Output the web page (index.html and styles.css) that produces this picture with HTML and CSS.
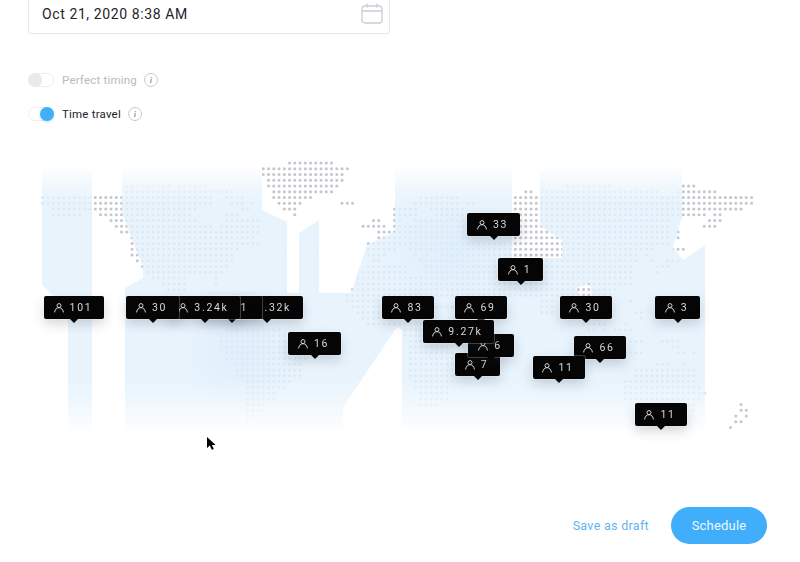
FILE: index.html
```html
<!DOCTYPE html>
<html lang="en">
<head>
<meta charset="utf-8">
<title>Schedule post</title>
<link rel="stylesheet" href="styles.css">
</head>
<body>
<svg class="sprite" aria-hidden="true">
  <symbol id="person" viewBox="0 0 10 10"><circle cx="5" cy="2.6" r="2"/><path d="M.6 9.4C1 6.4 2.6 4.7 5 4.7s4 1.7 4.4 4.7"/></symbol>
</svg>
<main class="page">
  <div class="field">
    <span class="field-value">Oct 21, 2020 8:38 AM</span>
    <svg class="calendar" viewBox="0 0 22 21"><rect x="1" y="3" width="20" height="17" rx="3"/><path d="M1 8h20M6 .5v4M16 .5v4"/></svg>
  </div>
  <div class="option option-off">
    <span class="toggle"><span class="knob"></span></span>
    <span class="option-label">Perfect timing</span>
    <span class="info">i</span>
  </div>
  <div class="option option-on">
    <span class="toggle"><span class="knob"></span></span>
    <span class="option-label">Time travel</span>
    <span class="info">i</span>
  </div>
  <section class="map">
    <svg class="map-art" viewBox="0 155 800 290">
      <defs>
        <linearGradient id="fade" gradientUnits="userSpaceOnUse" x1="0" y1="166" x2="0" y2="434">
          <stop offset="0" stop-color="#fff" stop-opacity=".95"/>
          <stop offset=".13" stop-color="#e3f1fc" stop-opacity=".82"/>
          <stop offset=".8" stop-color="#e3f1fc" stop-opacity=".82"/>
          <stop offset="1" stop-color="#fff" stop-opacity=".95"/>
        </linearGradient>
        <radialGradient id="blob"><stop offset="0" stop-color="#d6e9fb" stop-opacity=".45"/><stop offset="1" stop-color="#d6e9fb" stop-opacity="0"/></radialGradient>
      </defs>
      <g transform="translate(42.8 163) scale(5.25 5.75)">
        <path class="dots" d="
M47 0H55.1
M42 1H58.1
M42 2H57.1
M43 3H57.1
M43 4H56.1M16 4H24.1M26 4H31.1M100 4H108.1M122 4H124.1
M44 5H55.1M16 5H36.1M92 5H93.1M95 5H117.1M121 5H128.1
M44 6H51.1M0 6H32.1M35 6H38.1M72 6H79.1M90 6H135.1
M45 7H49.1M57 7H59.1M0 7H32.1M36 7H38.1M40 7H40.1M71 7H79.1M81 7H82.1M90 7H135.1
M46 8H48.1M2 8H29.1M38 8H39.1M67 8H71.1M74 8H80.1M90 8H133.1
M48 9H48.1M2 9H7.1M11 9H28.1M35 9H37.1M67 9H71.1M75 9H80.1M90 9H126.1M128 9H129.1
M13 10H29.1M35 10H41.1M63 10H64.1M67 10H68.1M71 10H72.1M73 10H81.1M90 10H119.1M127 10H129.1
M14 11H32.1M34 11H41.1M61 11H65.1M67 11H81.1M89 11H119.1M126 11H128.1
M15 12H41.1M64 12H81.1M89 12H119.1M121 12H121.1
M17 13H40.1M64 13H82.1M89 13H119.1M121 13H121.1
M17 14H41.1M62 14H63.1M64 14H119.1
M17 15H37.1M62 15H67.1M70 15H71.1M72 15H74.1M75 15H116.1M120 15H122.1
M17 16H36.1M62 16H65.1M71 16H71.1M73 16H73.1M76 16H113.1M115 16H115.1
M18 17H36.1M63 17H64.1M72 17H113.1M116 17H116.1M119 17H121.1
M19 18H35.1M62 18H69.1M73 18H112.1M117 18H119.1
M20 19H34.1M61 19H69.1M73 19H112.1M117 19H117.1
M21 20H27.1M33 20H33.1M60 20H66.1M67 20H112.1
M23 21H27.1M33 21H33.1M60 21H66.1M67 21H112.1
M24 22H27.1M59 22H66.1M67 22H109.1
M58 23H66.1M67 23H108.1
M58 24H64.1M95 24H97.1M112 24H112.1
M59 25H64.1M75 25H78.1M95 25H97.1
M60 26H64.1M95 26H97.1M113 26H114.1
M61 27H64.1M114 27H114.1
M62 28H73.1M103 28H107.1M111 28H111.1
M35 29H45.1M69 29H73.1M104 29H105.1M107 29H107.1M109 29H112.1
M34 30H46.1M69 30H76.1
M34 31H47.1M70 31H81.1M111 31H114.1M118 31H121.1
M34 32H48.1M70 32H81.1M120 32H121.1
M35 33H48.1M70 33H78.1M111 33H114.1M121 33H122.1M124 33H124.1
M35 34H50.1M70 34H78.1
M37 35H49.1M70 35H78.1M117 35H119.1M122 35H122.1
M37 36H49.1M70 36H78.1M113 36H124.1
M37 37H49.1M70 37H78.1M113 37H124.1
M39 38H47.1M71 38H78.1M111 38H124.1
M39 39H46.1M71 39H77.1M111 39H125.1
M39 40H44.1M72 40H77.1M111 40H126.1
M39 41H44.1M72 41H77.1M111 41H125.1
M39 42H42.1M72 42H75.1M113 42H124.1M133 42H133.1
M39 43H42.1M124 43H124.1M133 43H134.1
M39 44H40.1M124 44H124.1M132 44H132.1M134 44H134.1
M39 45H39.1M132 45H133.1
M131 46H131.1"/>
      </g>
      <path class="bands" d="M42 168H92V430H68V297H55L42 285Z
M122 168H262V210L287 222V293H299V233L319 220V293H351L367 245L395 232V168H512V258H562V240L540 226V168H682V217L673 247L683 260L705 245V430H402V330L397 327L343 407V430H125V288L143 278V267L122 213Z
M576 288L590 283L592 297L580 297Z"/>
      <ellipse class="blob" cx="240" cy="350" rx="60" ry="60"/>
      <ellipse class="blob" cx="450" cy="250" rx="70" ry="60"/>
    </svg>

    <div class="pin pin-101"><svg class="person"><use href="#person"/></svg><span>101</span></div>
    <div class="pin pin-132"><svg class="person"><use href="#person"/></svg><span>1.32k</span></div>
    <div class="pin pin-1a"><svg class="person"><use href="#person"/></svg><span>1</span></div>
    <div class="pin pin-324"><svg class="person"><use href="#person"/></svg><span>3.24k</span></div>
    <div class="pin pin-30a"><svg class="person"><use href="#person"/></svg><span>30</span></div>
    <div class="pin pin-16"><svg class="person"><use href="#person"/></svg><span>16</span></div>
    <div class="pin pin-33"><svg class="person"><use href="#person"/></svg><span>33</span></div>
    <div class="pin pin-1b"><svg class="person"><use href="#person"/></svg><span>1</span></div>
    <div class="pin pin-83"><svg class="person"><use href="#person"/></svg><span>83</span></div>
    <div class="pin pin-69"><svg class="person"><use href="#person"/></svg><span>69</span></div>
    <div class="pin pin-7"><svg class="person"><use href="#person"/></svg><span>7</span></div>
    <div class="pin pin-6"><svg class="person"><use href="#person"/></svg><span>6</span></div>
    <div class="pin pin-927"><svg class="person"><use href="#person"/></svg><span>9.27k</span></div>
    <div class="pin pin-30b"><svg class="person"><use href="#person"/></svg><span>30</span></div>
    <div class="pin pin-3"><svg class="person"><use href="#person"/></svg><span>3</span></div>
    <div class="pin pin-66"><svg class="person"><use href="#person"/></svg><span>66</span></div>
    <div class="pin pin-11a"><svg class="person"><use href="#person"/></svg><span>11</span></div>
    <div class="pin pin-11b"><svg class="person"><use href="#person"/></svg><span>11</span></div>

    <svg class="cursor" viewBox="0 0 9 13"><path d="M0 0V11L2.8 8.6L4.8 12.8L6.8 11.9L4.9 7.9H8.6Z"/></svg>
  </section>
  <footer class="actions">
    <button class="btn-link" type="button">Save as draft</button>
    <button class="btn-primary" type="button">Schedule</button>
  </footer>
</main>
</body>
</html>
```
FILE: styles.css
```css
* { box-sizing: border-box; }
html, body { margin: 0; padding: 0; background: #fff; }
body { font-family: Roboto, "Liberation Sans", sans-serif; color: #16181d; }
.sprite { display: none; }
.page { width: 800px; height: 562px; overflow: hidden; display: flex; flex-direction: column; }

.field {
  width: 362px; height: 34px; margin-left: 28px;
  display: flex; align-items: center; justify-content: space-between;
  padding: 0 6px 6px 13px;
  border: 1px solid #e4e7ec; border-top: 0; border-radius: 0 0 4px 4px;
}
.field-value { font-size: 14px; letter-spacing: .6px; color: #22242a; }
.calendar { width: 22px; height: 21px; fill: none; stroke: #c9cdd4; stroke-width: 1.3; }

.option { display: flex; align-items: center; height: 18px; margin-left: 28px; }
.option-off { margin-top: 37px; color: #b7bac2; }
.option-on { margin-top: 16px; color: #22242a; }
.toggle {
  width: 26px; height: 14px; border: 1px solid #eceef1; border-radius: 7px;
  position: relative; flex: none; display: flex; align-items: center;
}
.knob { width: 14px; height: 14px; border-radius: 50%; flex: none; margin: 0 -1px; }
.option-off .knob { background: #e9eaed; }
.option-on .toggle { justify-content: flex-end; }
.option-on .knob { background: #42aef7; box-shadow: 0 1px 3px rgba(66,174,247,.35); }
.option-label { font-size: 11.5px; letter-spacing: .2px; margin-left: 8px; }
.info {
  width: 14px; height: 14px; border: 1px solid #c6cad2; border-radius: 50%; margin-left: 7px;
  display: flex; align-items: center; justify-content: center;
  font: italic 700 8px "Liberation Serif", serif; color: #8a8f99;
}

.map { position: relative; width: 800px; height: 290px; margin-top: 32px; flex: none; }
.map-art { display: block; width: 800px; height: 290px; }
.dots { fill: none; stroke: #c4c7cd; stroke-width: 3.1; stroke-linecap: round; stroke-dasharray: 0 5.25; vector-effect: non-scaling-stroke; }
.bands { fill: url(#fade); fill-rule: evenodd; filter: blur(.7px); }
.blob { fill: url(#blob); }

.pin {
  position: absolute; height: 23px; display: flex; align-items: center; justify-content: center; gap: 6px;
  background: #050505; border-radius: 2px; color: #d8d8d8;
  font-size: 10.5px; letter-spacing: 1.7px; line-height: 1;
  box-shadow: 0 0 0 1px rgba(255,255,255,.22), 0 5px 12px rgba(40,50,70,.2);
  will-change: transform;
}
.pin span { padding-top: 2px; margin-right: 2px; }
.pin::after {
  content: ""; position: absolute; left: 50%; top: 100%; margin-left: -4px;
  border: 4px solid transparent; border-top-color: #050505; border-bottom: 0;
}
.person { width: 10px; height: 10px; flex: none; fill: none; stroke: #d8d8d8; stroke-width: 1; }

.pin-101 { left: 44px; top: 141px; width: 60px; }
.pin-132 { left: 231px; top: 141px; width: 72px; }
.pin-1a { left: 202px; top: 141px; width: 60px; justify-content: flex-end; padding-right: 12px; }
.pin-324 { left: 169px; top: 141px; width: 71px; }
.pin-30a { left: 126px; top: 141px; width: 53px; }
.pin-16 { left: 288px; top: 177px; width: 53px; }
.pin-33 { left: 467px; top: 58px; width: 53px; }
.pin-1b { left: 498px; top: 103px; width: 45px; }
.pin-83 { left: 382px; top: 141px; width: 52px; }
.pin-69 { left: 455px; top: 141px; width: 52px; }
.pin-7 { left: 455px; top: 198px; width: 45px; }
.pin-6 { left: 468px; top: 179px; width: 46px; }
.pin-927 { left: 423px; top: 165px; width: 71px; }
.pin-30b { left: 560px; top: 141px; width: 52px; }
.pin-3 { left: 655px; top: 141px; width: 45px; }
.pin-66 { left: 574px; top: 181px; width: 52px; }
.pin-11a { left: 533px; top: 201px; width: 52px; }
.pin-11b { left: 635px; top: 248px; width: 52px; }

.cursor { position: absolute; left: 207px; top: 282px; width: 9px; height: 13px; fill: #000; }

.actions { display: flex; align-items: center; justify-content: flex-end; gap: 22px; margin-top: 62px; padding-right: 33px; }
.btn-link { border: 0; background: none; padding: 0; font: 400 12.5px Roboto, sans-serif; letter-spacing: .3px; color: #5db6ee; }
.btn-primary {
  width: 96px; height: 37px; border: 0; border-radius: 19px; background: #40aefb;
  font: 400 13px Roboto, sans-serif; letter-spacing: .2px; color: #eef8ff;
}
```
